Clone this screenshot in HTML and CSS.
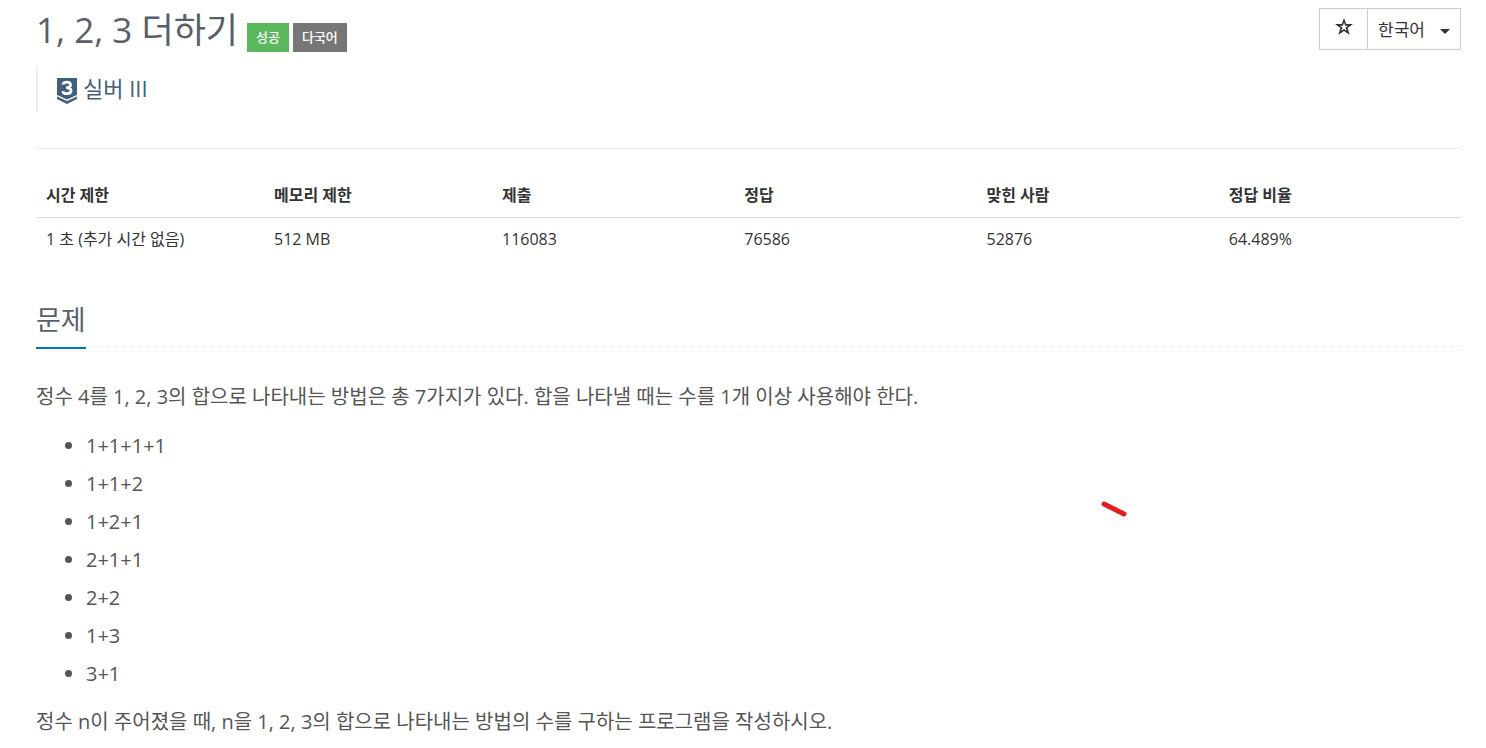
FILE: index.html
```
<!DOCTYPE html>
<html lang="ko">
<head>
  <meta charset="UTF-8" />
  <meta name="viewport" content="width=device-width, initial-scale=1" />
  <title>1, 2, 3 더하기</title>
  <link rel="stylesheet" href="styles.css">
</head>
<body>

  <main class="container">
    <header class="page-header">
      <div class="heading">
        <div class="title-row">
          <h1 class="title">1, 2, 3 더하기</h1>
          <span class="label label-success">성공</span>
          <span class="label label-default">다국어</span>
        </div>
        <blockquote class="tier">
          <svg class="tier-icon" viewBox="0 0 20 26" aria-hidden="true">
            <path d="M0 0H20V17L10 21.500L0 17Z" fill="#435f7a" />
            <path d="M0 18.500L10 23L20 18.500V21L10 26L0 21Z" fill="#435f7a" />
            <path d="M6 6.500C6.500 3.500 13.500 3.200 13.500 6.700C13.500 8.700 11.800 9.700 9 9.700C12 9.700 14 10.700 14 12.800C14 16.600 6.300 16.500 5.700 13.200" fill="none" stroke="#fff" stroke-width="2.800" />
          </svg>
          <span>실버 III</span>
        </blockquote>
      </div>

      <div class="tools">
        <button type="button" class="star-btn" aria-label="즐겨찾기">
          <svg viewBox="0 0 18 18" width="18" height="18" aria-hidden="true">
            <path fill="#333" fill-rule="evenodd" d="M9 0L11.200 6H18L12.600 10.100L14.600 16.800L9 12.900L3.400 16.800L5.400 10.100L0 6H6.800ZM9 4.500L7.900 7.700H4.900L7.400 9.600L6.400 12.700L9 10.900L11.600 12.700L10.600 9.600L13.100 7.700H10.100Z" />
          </svg>
        </button>
        <div class="lang">
          <select class="lang-select" aria-label="언어">
            <option>한국어</option>
          </select>
          <span class="caret"></span>
        </div>
      </div>
    </header>

    <table class="info">
      <thead>
        <tr>
          <th class="col-limit">시간 제한</th>
          <th class="col-limit">메모리 제한</th>
          <th>제출</th>
          <th>정답</th>
          <th>맞힌 사람</th>
          <th>정답 비율</th>
        </tr>
      </thead>
      <tbody>
        <tr>
          <td>1 초 (추가 시간 없음)</td>
          <td>512 MB</td>
          <td>116083</td>
          <td>76586</td>
          <td>52876</td>
          <td>64.489%</td>
        </tr>
      </tbody>
    </table>

    <section class="problem">
      <div class="headline">
        <h2>문제</h2>
      </div>
      <div class="problem-text">
        <p>정수 4를 1, 2, 3의 합으로 나타내는 방법은 총 7가지가 있다. 합을 나타낼 때는 수를 1개 이상 사용해야 한다.</p>
        <ul>
          <li>1+1+1+1</li>
          <li>1+1+2</li>
          <li>1+2+1</li>
          <li>2+1+1</li>
          <li>2+2</li>
          <li>1+3</li>
          <li>3+1</li>
        </ul>
        <p>정수 n이 주어졌을 때, n을 1, 2, 3의 합으로 나타내는 방법의 수를 구하는 프로그램을 작성하시오.</p>
      </div>
    </section>
  </main>

  <!-- pen stroke -->
  <svg class="pen-mark" viewBox="0 0 28 18" aria-hidden="true">
    <path d="M4 4L24 14" stroke="#e81b1f" stroke-width="5" stroke-linecap="round" />
  </svg>

</body>
</html>
```

FILE: styles.css
```
* {
  box-sizing: border-box;
}
body {
  margin: 0;
  font-family: "Open Sans", "Noto Sans CJK KR", sans-serif;
  font-size: 16px;
  line-height: 26px;
  color: #333;
  background: #fff;
  position: relative;
}
.container {
  padding: 8px 25px 0 36px;
}

/* --- Header --- */
.page-header {
  display: flex;
  justify-content: space-between;
  align-items: flex-start;
  padding-bottom: 36px;
  border-bottom: 1px solid #eee;
}
.title-row {
  display: flex;
  align-items: flex-end;
  gap: 4px;
  height: 44px;
}
.title {
  margin: 0 5px 0 0;
  font-size: 35px;
  font-weight: 400;
  line-height: 44px;
  color: #585f69;
}
.label {
  padding: 0 9px;
  font-size: 13px;
  font-weight: 500;
  line-height: 29px;
  color: #fff;
}
.label-success {
  background: #5cb85c;
}
.label-default {
  background: #777;
}
.tier {
  display: flex;
  align-items: flex-end;
  gap: 6px;
  margin: 14px 0 0;
  padding: 0 0 8px 19px;
  height: 46px;
  border-left: 2px solid #eee;
  font-size: 22px;
  line-height: 32px;
  color: #435f7a;
}
.tier-icon {
  width: 20px;
  height: 26px;
}

/* --- Buttons --- */
.tools {
  display: flex;
  height: 42px;
  border: 1px solid #ccc;
}
.star-btn {
  width: 47px;
  padding: 0 0 2px;
  border: 0;
  background: #fff;
  cursor: pointer;
}
.lang {
  position: relative;
  display: flex;
  border-left: 1px solid #ccc;
}
.lang-select {
  appearance: none;
  width: 92px;
  padding: 0 10px;
  border: 0;
  border-radius: 0;
  background: #fff;
  font-family: inherit;
  font-size: 17px;
  color: #333;
}
.caret {
  position: absolute;
  right: 10px;
  top: 20px;
  border-top: 5px solid #333;
  border-left: 5px solid transparent;
  border-right: 5px solid transparent;
  pointer-events: none;
}

/* --- Info table --- */
.info {
  width: 100%;
  margin-top: 24px;
  table-layout: fixed;
  border-collapse: collapse;
}
.info th,
.info td {
  width: 17%;
  padding: 9px 10px;
  text-align: left;
}
.info .col-limit {
  width: 16%;
}
.info th {
  font-weight: 700;
  border-bottom: 1px solid #ddd;
}
.info td {
  padding-top: 8px;
}

/* --- Problem --- */
.headline {
  display: flex;
  margin: 40px 0 35px;
  border-bottom: 1px dotted #e4e9f0;
}
.headline h2 {
  margin: 0 0 -3px;
  padding-bottom: 8px;
  font-size: 27px;
  font-weight: 400;
  line-height: 38px;
  color: #585f69;
  border-bottom: 2px solid #0076bd;
}
.problem-text {
  font-size: 20px;
  line-height: 30px;
  color: #555;
}
.problem-text p {
  margin: 0 0 17px;
}
.problem-text ul {
  display: grid;
  gap: 4px;
  margin: 0 0 16px;
  padding-left: 50px;
}
.problem-text li {
  line-height: 34px;
}

.pen-mark {
  position: absolute;
  left: 1100px;
  top: 500px;
  width: 28px;
  height: 18px;
}
```
